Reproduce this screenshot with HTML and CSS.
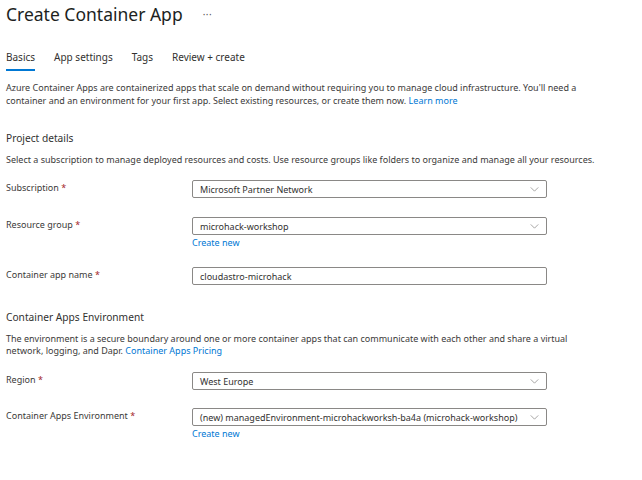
FILE: index.html
```html
<!DOCTYPE html>
<html>
<head>
<meta charset="utf-8">
<link rel="stylesheet" href="styles.css">
</head>
<body>
<div class="page">
  <header class="titlebar">
    <h1 class="title">Create Container App</h1>
    <span class="more">···</span>
  </header>
  <nav class="tabs">
    <span class="tab active">Basics</span>
    <span class="tab">App settings</span>
    <span class="tab">Tags</span>
    <span class="tab">Review + create</span>
  </nav>
  <p class="desc intro">Azure Container Apps are containerized apps that scale on demand without requiring you to manage cloud infrastructure. You'll need a container and an environment for your first app. Select existing resources, or create them now. <a class="link">Learn more</a></p>

  <h2 class="section">Project details</h2>
  <p class="desc sub">Select a subscription to manage deployed resources and costs. Use resource groups like folders to organize and manage all your resources.</p>

  <div class="row r-sub">
    <div class="label">Subscription <span class="req">*</span></div>
    <div class="field">
      <div class="box select"><span>Microsoft Partner Network</span><svg class="chev" viewBox="0 0 10 6"><path d="M0.5 0.5L5 5L9.5 0.5" fill="none" stroke="#8a8886" stroke-width="0.9"/></svg></div>
    </div>
  </div>
  <div class="row r-rg">
    <div class="label">Resource group <span class="req">*</span></div>
    <div class="field">
      <div class="box select"><span>microhack-workshop</span><svg class="chev" viewBox="0 0 10 6"><path d="M0.5 0.5L5 5L9.5 0.5" fill="none" stroke="#8a8886" stroke-width="0.9"/></svg></div>
      <a class="link create">Create new</a>
    </div>
  </div>
  <div class="row r-name">
    <div class="label">Container app name <span class="req">*</span></div>
    <div class="field">
      <div class="box"><span>cloudastro-microhack</span></div>
    </div>
  </div>

  <h2 class="section s2">Container Apps Environment</h2>
  <p class="desc env">The environment is a secure boundary around one or more container apps that can communicate with each other and share a virtual network, logging, and Dapr. <a class="link">Container Apps Pricing</a></p>

  <div class="row r-region">
    <div class="label">Region <span class="req">*</span></div>
    <div class="field">
      <div class="box select"><span>West Europe</span><svg class="chev" viewBox="0 0 10 6"><path d="M0.5 0.5L5 5L9.5 0.5" fill="none" stroke="#8a8886" stroke-width="0.9"/></svg></div>
    </div>
  </div>
  <div class="row r-env">
    <div class="label">Container Apps Environment <span class="req">*</span></div>
    <div class="field">
      <div class="box select"><span class="long">(new) managedEnvironment-microhackworksh-ba4a (microhack-workshop)</span><svg class="chev" viewBox="0 0 10 6"><path d="M0.5 0.5L5 5L9.5 0.5" fill="none" stroke="#8a8886" stroke-width="0.9"/></svg></div>
      <a class="link create">Create new</a>
    </div>
  </div>
</div>
</body>
</html>
```
FILE: styles.css
```css
html, body {
  margin: 0;
  padding: 0;
  background: #ffffff;
}
body {
  font-family: "Noto Sans", "Open Sans", sans-serif;
  color: #3b3a39;
}
.page {
  padding: 0 6px;
  width: 630px;
}
.titlebar {
  display: flex;
  align-items: center;
  height: 28px;
}
.title {
  margin: 0;
  font-size: 17.5px;
  line-height: 24px;
  font-weight: 400;
  color: #201f1e;
}
.more {
  margin-left: 20px;
  font-size: 10px;
  color: #605e5c;
  letter-spacing: 0.5px;
}
.tabs {
  display: flex;
  gap: 19px;
  margin-top: 20px;
  height: 23px;
  font-size: 10px;
  line-height: 14px;
}
.tab {
  position: relative;
  padding-top: 2px;
  color: #323130;
}
.tab.active::after {
  content: "";
  position: absolute;
  left: 0;
  right: 0;
  top: 21px;
  height: 2px;
  background: #0078d4;
}
.desc {
  margin: 0;
  font-size: 9px;
  color: #3b3a39;
}
.intro {
  margin-top: 10px;
  line-height: 13px;
  max-width: 585px;
}
.sub {
  margin-top: 7px;
  line-height: 13px;
}
.env {
  margin-top: 8px;
  line-height: 12px;
  max-width: 585px;
}
.link {
  color: #0078d4;
}
.section {
  margin: 23px 0 0;
  font-size: 10.2px;
  font-weight: 400;
  line-height: 16px;
  color: #323130;
}
.section.s2 { margin-top: 24px; }
.row {
  display: flex;
}
.label {
  width: 186px;
  font-size: 9px;
  line-height: 14px;
  padding-top: 1px;
}
.req { color: #a4262c; }
.field {
  width: 355px;
  display: flex;
  flex-direction: column;
}
.box {
  height: 18px;
  box-sizing: border-box;
  border: 1px solid #8a8886;
  border-radius: 2px;
  display: flex;
  align-items: center;
  justify-content: space-between;
  padding: 0 7px 0 7px;
  font-size: 9px;
  color: #323130;
  white-space: nowrap;
}
.chev { width: 9px; height: 5px; flex: none; margin-left: 6px; }
.create {
  font-size: 9px;
  line-height: 12px;
  margin-top: 2px;
}
.r-sub { margin-top: 14px; }
.r-rg { margin-top: 19px; }
.r-name { margin-top: 18px; }
.r-region { margin-top: 15px; }
.r-env { margin-top: 18px; }
```
